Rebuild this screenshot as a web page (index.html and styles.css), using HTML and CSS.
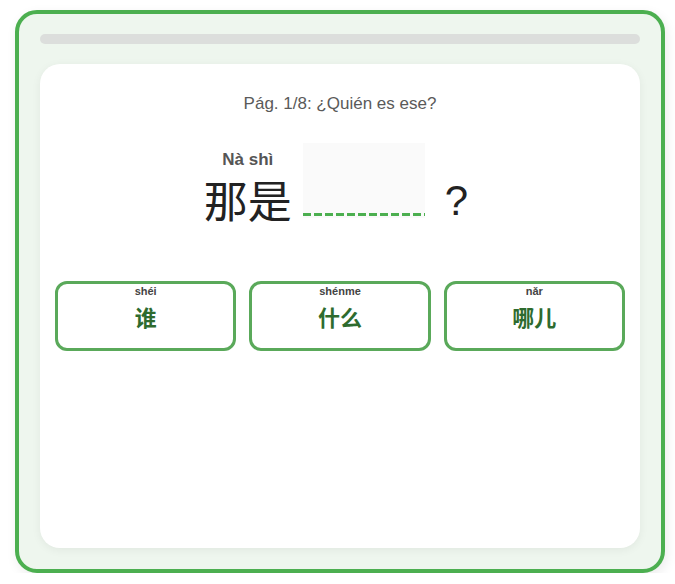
FILE: index.html
```html
<!DOCTYPE html>
<html lang="es">
<head>
<meta charset="utf-8">
<link rel="stylesheet" href="styles.css">
</head>
<body>
<div class="app">
  <div class="progress"><div class="progress-fill"></div></div>
  <div class="card">
    <div class="title">Pág. 1/8: ¿Quién es ese?</div>
    <div class="sentence">
      <div class="word">
        <div class="pinyin">Nà shì</div>
        <div class="hanzi">那是</div>
      </div>
      <div class="blank"></div>
      <div class="qmark">?</div>
    </div>
    <div class="options">
      <button class="option"><span class="opt-pinyin">shéi</span><span class="opt-hanzi">谁</span></button>
      <button class="option"><span class="opt-pinyin">shénme</span><span class="opt-hanzi">什么</span></button>
      <button class="option"><span class="opt-pinyin">nǎr</span><span class="opt-hanzi">哪儿</span></button>
    </div>
  </div>
</div>
</body>
</html>
```
FILE: styles.css
```css
html, body {
  margin: 0;
  padding: 0;
  background: #ffffff;
}
body {
  font-family: "Liberation Sans", Arial, "Noto Sans CJK SC", sans-serif;
  padding: 10px 10px 0 15px;
}
.app {
  box-sizing: border-box;
  width: 650px;
  height: 563px;
  border: 4px solid #4caf50;
  border-radius: 22px;
  background: #eef6ee;
  padding: 20px 21px 21px 21px;
  display: flex;
  flex-direction: column;
  gap: 20px;
  box-shadow: 2px 4px 12px rgba(0,0,0,0.08);
}
.progress {
  height: 10px;
  border-radius: 5px;
  background: #dcdedc;
  flex: none;
}
.progress-fill {
  width: 0;
  height: 100%;
}
.card {
  flex: 1;
  background: #ffffff;
  border-radius: 20px;
  box-shadow: 0 2px 10px rgba(0,0,0,0.06);
  padding: 30px 15px 20px;
  display: flex;
  flex-direction: column;
  align-items: stretch;
}
.title {
  text-align: center;
  font-size: 17px;
  line-height: 20px;
  color: #5a5a5a;
}
.sentence {
  display: flex;
  justify-content: center;
  align-items: flex-end;
  margin-top: 29px;
  margin-left: -8px;
}
.word {
  display: flex;
  flex-direction: column;
  align-items: center;
  margin-bottom: -1px;
}
.pinyin {
  font-weight: bold;
  font-size: 17px;
  line-height: 20px;
  color: #555555;
  margin-bottom: 5px;
}
.hanzi {
  font-family: "Noto Sans CJK SC", sans-serif;
  font-size: 44px;
  line-height: 48px;
  color: #222222;
}
.blank {
  position: relative;
  width: 122px;
  height: 75px;
  margin: 0 0 4px 11px;
  background: #fafafa;
}
.blank::after {
  content: "";
  position: absolute;
  left: 0;
  right: 0;
  bottom: 2px;
  height: 3px;
  background: repeating-linear-gradient(90deg, #4caf50 0 8px, transparent 8px 11px);
}
.qmark {
  font-size: 42px;
  line-height: 52px;
  color: #222222;
  margin-left: 20px;
  margin-bottom: -5px;
}
.options {
  display: grid;
  grid-template-columns: repeat(3, 1fr);
  gap: 13px;
  margin-top: 59px;
}
.option {
  height: 70px;
  box-sizing: border-box;
  border: 3px solid #5aa95a;
  border-radius: 12px;
  background: #ffffff;
  display: flex;
  flex-direction: column;
  align-items: center;
  justify-content: flex-start;
  padding: 1px 0 0;
  font-family: "Liberation Sans", Arial, "Noto Sans CJK SC", sans-serif;
}
.opt-pinyin {
  font-size: 11px;
  line-height: 13px;
  font-weight: bold;
  color: #444444;
}
.opt-hanzi {
  font-family: "Noto Sans CJK SC", sans-serif;
  font-size: 22px;
  line-height: 30px;
  font-weight: bold;
  color: #2e6b2e;
  margin-top: 3px;
}
```
